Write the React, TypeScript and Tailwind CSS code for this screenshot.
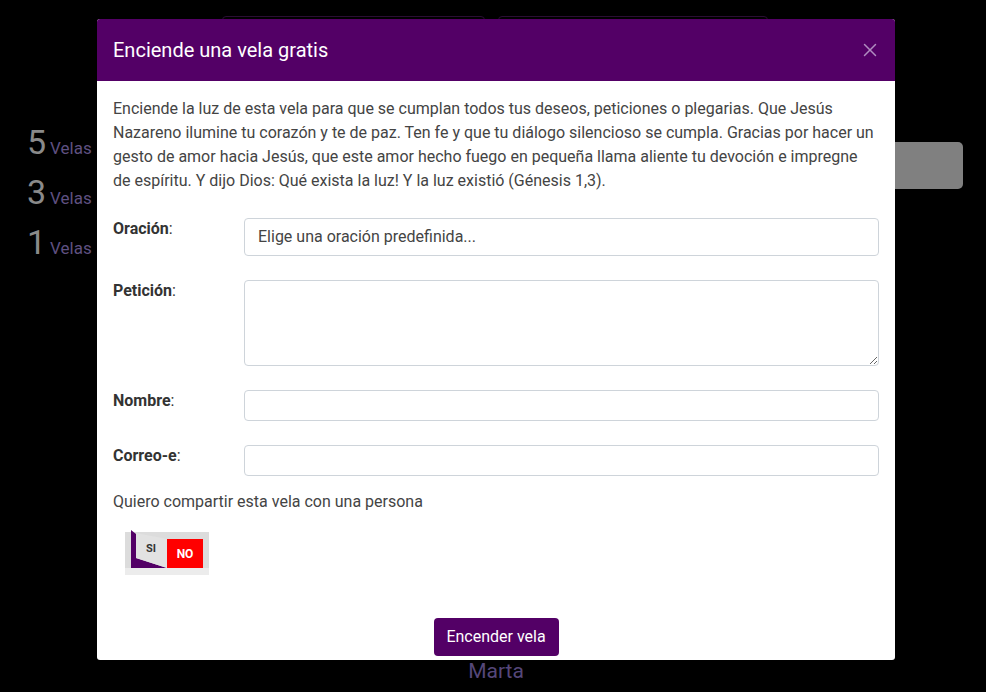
import { X } from "lucide-react";

const rows = [
  { label: "Oración", kind: "select" },
  { label: "Petición", kind: "textarea" },
  { label: "Nombre", kind: "input" },
  { label: "Correo-e", kind: "input" },
];

function ShareToggle() {
  return (
    <div className="relative w-[84px] h-[43px] bg-[#ececec] ml-[12px]">
      <div className="absolute left-0 top-0 w-[84px] h-[36px] bg-[#dcdcdc]" />
      <svg
        className="absolute left-0 top-[-3px]"
        width="44"
        height="42"
        viewBox="0 -3 44 42"
      >
        <polygon points="6,-2 11,2 11,26 42,36 6,36" fill="#530066" />
        <polygon points="11,1 42,7 42,36 11,26" fill="#e2e2e2" />
      </svg>
      <span className="absolute left-[21px] top-[9px] text-[11px] font-bold text-[#333]">
        SI
      </span>
      <div className="absolute left-[42px] top-[7px] w-[36px] h-[29px] bg-[#ff0000] flex items-center justify-center text-white text-[12px] font-bold">
        NO
      </div>
    </div>
  );
}

export default function App() {
  return (
    <div className="relative h-[692px] w-full overflow-hidden bg-black font-['Roboto',sans-serif]">
      {/* page behind the modal */}
      <div className="flex gap-[13px] pl-[222px] pt-[16px]">
        <div className="w-[263px] h-[20px] rounded-t-[4px] border border-[#2b0d33]" />
        <div className="w-[270px] h-[20px] rounded-t-[4px] border border-[#2b0d33]" />
      </div>
      <div className="flex justify-between pl-[27px] pr-[23px] pt-[88px]">
        <div className="flex flex-col gap-[14px]">
          {[5, 3, 1].map((n) => (
            <div key={n} className="flex items-baseline gap-[4px] h-[36px]">
              <span className="text-[34px] leading-[36px] text-[#8a8a8a]">{n}</span>
              <span className="text-[17px] text-[#5f5080]">Velas</span>
            </div>
          ))}
        </div>
        <div className="mt-[18px] w-[101px] h-[47px] rounded-[5px] bg-[#808080]" />
      </div>
      <div className="mt-[396px] pl-[6px] text-center text-[21px] text-[#55477a]">Marta</div>

      {/* modal */}
      <div className="absolute left-[97px] top-[19px] w-[798px] h-[641px] bg-white rounded-[3px] overflow-hidden">
        <div className="h-[62px] bg-[#530066] flex items-center justify-between pl-[16px] pr-[14px]">
          <h2 className="text-[20px] text-white">Enciende una vela gratis</h2>
          <X className="w-[22px] h-[22px] text-[#b08cc0]" strokeWidth={1.6} />
        </div>
        <div className="px-[16px] pt-[16px] text-[#444] text-[16px]">
          <p className="leading-[24px]">
            Enciende la luz de esta vela para que se cumplan todos tus deseos, peticiones o
            plegarias. Que Jesús Nazareno ilumine tu corazón y te de paz. Ten fe y que tu
            diálogo silencioso se cumpla. Gracias por hacer un gesto de amor hacia Jesús, que
            este amor hecho fuego en pequeña llama aliente tu devoción e impregne de espíritu. Y
            dijo Dios: Qué exista la luz! Y la luz existió (Génesis 1,3).
          </p>
          <div className="mt-[25px] flex flex-col gap-[24px]">
            {rows.map((r) => (
              <div key={r.label} className="flex items-start">
                <div className="w-[131px] -mt-[1px] leading-[24px] text-[16px] text-[#333]">
                  <span className="font-bold">{r.label}</span>:
                </div>
                {r.kind === "select" && (
                  <div className="flex-1 h-[38px] rounded-[4px] border border-[#ced4da] px-[13px] flex items-center text-[#444]">
                    Elige una oración predefinida...
                  </div>
                )}
                {r.kind === "textarea" && (
                  <textarea className="flex-1 h-[86px] rounded-[4px] border border-[#ced4da]" />
                )}
                {r.kind === "input" && (
                  <div className="flex-1 h-[31px] rounded-[4px] border border-[#ced4da]" />
                )}
              </div>
            ))}
          </div>
          <p className="mt-[14px] leading-[24px]">Quiero compartir esta vela con una persona</p>
          <div className="mt-[18px]">
            <ShareToggle />
          </div>
          <div className="mt-[43px] flex justify-center">
            <button className="w-[125px] h-[38px] rounded-[4px] bg-[#530066] text-white text-[16px]">
              Encender vela
            </button>
          </div>
        </div>
      </div>
    </div>
  );
}
